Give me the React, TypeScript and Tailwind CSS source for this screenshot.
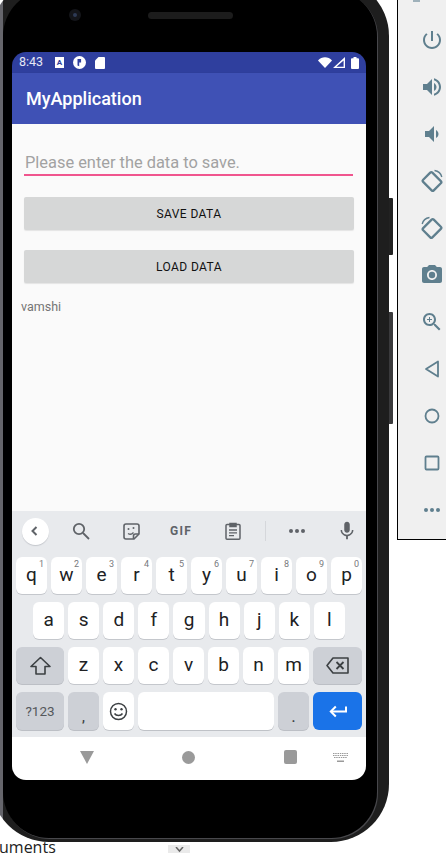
import React from 'react';

const rowOne = [
  ['q', '1'], ['w', '2'], ['e', '3'], ['r', '4'], ['t', '5'],
  ['y', '6'], ['u', '7'], ['i', '8'], ['o', '9'], ['p', '0'],
];
const rowTwo = ['a', 's', 'd', 'f', 'g', 'h', 'j', 'k', 'l'];
const rowThree = ['z', 'x', 'c', 'v', 'b', 'n', 'm'];

function Key({ label, hint }: { label: string; hint?: string }) {
  return (
    <div className="relative flex-1 rounded-[6px] bg-white shadow-[0_1px_0_#c4c7cc] flex items-center justify-center text-[19px] text-[#202124]">
      {label}
      {hint && <span className="absolute top-[2px] right-[3px] text-[9px] leading-[11px] text-[#77797d]">{hint}</span>}
    </div>
  );
}

function ModKey({ className, children }: { className: string; children: React.ReactNode }) {
  return (
    <div className={`rounded-[6px] bg-[#cdd0d6] shadow-[0_1px_0_#bcbfc5] flex items-center justify-center text-[#3c4043] ${className}`}>
      {children}
    </div>
  );
}

function Tool({ className, children }: { className: string; children: React.ReactNode }) {
  return <div className={`flex items-center justify-center shrink-0 ${className}`}>{children}</div>;
}

function PanelIcon({ children }: { children: React.ReactNode }) {
  return (
    <div className="h-[47px] flex items-center justify-center">
      <svg width="24" height="24" viewBox="0 0 24 24" fill="#5f7f8e">
        {children}
      </svg>
    </div>
  );
}

function StatusBar() {
  return (
    <div className="h-[21px] bg-[#2f3f9e] flex items-center pl-[7px] pr-[7px] text-white text-[12.5px]">
      <span className="w-[36px] text-[#e6e8f5]">8:43</span>
      <div className="w-[9px] h-[11px] bg-white flex items-center justify-center text-[8px] font-bold text-[#2f3f9e] leading-none">A</div>
      <svg className="ml-[9px]" width="13" height="13" viewBox="0 0 13 13">
        <circle cx="6.5" cy="6.5" r="6.5" fill="#fff" />
        <path d="M4.5 3h3.6v3.4H6.2v3.8L4.5 9.6z" fill="#2f3f9e" />
      </svg>
      <svg className="ml-[9px]" width="10" height="12" viewBox="0 0 10 12">
        <path d="M3.5 0H9a1 1 0 0 1 1 1v10a1 1 0 0 1-1 1H1a1 1 0 0 1-1-1V3.5z" fill="#fff" />
      </svg>
      <div className="flex-1" />
      <svg width="14" height="11" viewBox="0 0 14 11">
        <path d="M0 3.4C3.8-.9 10.2-.9 14 3.4L7 11z" fill="#fff" />
      </svg>
      <svg className="ml-[1px]" width="12" height="11" viewBox="0 0 12 11">
        <path d="M12 0v11H0zM10.6 3.4 3.4 9.8h7.2z" fill="#fff" fillRule="evenodd" />
      </svg>
      <svg className="ml-[6px]" width="8" height="12" viewBox="0 0 8 12">
        <path d="M2.5 0h3v1.2H7a1 1 0 0 1 1 1V11a1 1 0 0 1-1 1H1a1 1 0 0 1-1-1V2.200a1 1 0 0 1 1-1h1.500z" fill="#fff" />
      </svg>
    </div>
  );
}

function Toolbar() {
  return (
    <div className="h-[46px] flex items-center pb-[6px]">
      <Tool className="w-[46px]">
        <div className="w-[27px] h-[27px] rounded-full bg-white shadow-[0_1px_1px_#c4c7cc] flex items-center justify-center">
          <svg width="12" height="12" viewBox="0 0 12 12" fill="none" stroke="#5f6368" strokeWidth="2">
            <path d="M7.500 2 3.500 6l4 4" />
          </svg>
        </div>
      </Tool>
      <Tool className="w-[46px]">
        <svg width="18" height="18" viewBox="0 0 18 18" fill="none" stroke="#5f6368" strokeWidth="1.800">
          <circle cx="7" cy="7" r="5.200" />
          <path d="m11 11 6 6" />
        </svg>
      </Tool>
      <Tool className="w-[54px]">
        <svg width="17" height="17" viewBox="0 0 17 17" fill="none" stroke="#5f6368" strokeWidth="1.600">
          <path d="M3 1h11a2 2 0 0 1 2 2v8l-5 5H3a2 2 0 0 1-2-2V3a2 2 0 0 1 2-2z" />
          <path d="M10.500 16v-3a2 2 0 0 1 2-2H16" />
          <path d="M5 10.500c2 1.300 4 .8 5.500-1" strokeWidth="1.300" />
          <circle cx="5.500" cy="6" r="1" fill="#5f6368" stroke="none" />
          <circle cx="10.500" cy="5" r="1" fill="#5f6368" stroke="none" />
        </svg>
      </Tool>
      <Tool className="w-[46px] text-[12px] font-bold tracking-[1.2px] text-[#5f6368]">GIF</Tool>
      <Tool className="w-[58px]">
        <svg width="16" height="18" viewBox="0 0 16 18" fill="none" stroke="#5f6368" strokeWidth="1.500">
          <path d="M5 2.500H2a1 1 0 0 0-1 1v12.700a1 1 0 0 0 1 1h12a1 1 0 0 0 1-1V3.500a1 1 0 0 0-1-1h-3" />
          <path d="M5 1.500h6V4.500H5z" fill="#5f6368" />
          <path d="M4 8h8M4 10.800h8M4 13.600h5" strokeWidth="1.300" />
        </svg>
      </Tool>
      <Tool className="w-[6px]">
        <div className="w-px h-[20px] bg-[#d5d7db]" />
      </Tool>
      <Tool className="w-[58px] gap-[2px]">
        <div className="w-[4px] h-[4px] rounded-full bg-[#5f6368]" />
        <div className="w-[4px] h-[4px] rounded-full bg-[#5f6368]" />
        <div className="w-[4px] h-[4px] rounded-full bg-[#5f6368]" />
      </Tool>
      <Tool className="w-[42px]">
        <svg width="22" height="22" viewBox="0 0 24 24" fill="#5f6368">
          <path d="M12 14c1.660 0 2.990-1.340 2.990-3L15 5c0-1.660-1.340-3-3-3S9 3.340 9 5v6c0 1.660 1.340 3 3 3zm5.300-3c0 3-2.540 5.100-5.300 5.100S6.700 14 6.700 11H5c0 3.410 2.720 6.230 6 6.720V21h2v-3.280c3.280-.48 6-3.300 6-6.720h-1.700z" />
        </svg>
      </Tool>
    </div>
  );
}

function Keyboard() {
  return (
    <div className="h-[226px] bg-[#e8eaed]">
      <Toolbar />
      <div className="flex flex-col gap-[8px] px-[4px]">
        <div className="h-[37px] flex gap-[4px]">
          {rowOne.map(([k, n]) => <Key key={k} label={k} hint={n} />)}
        </div>
        <div className="h-[37px] flex gap-[4px] px-[17px]">
          {rowTwo.map((k) => <Key key={k} label={k} />)}
        </div>
        <div className="h-[37px] flex gap-[4px]">
          <ModKey className="w-[48px] shrink-0">
            <svg width="21" height="20" viewBox="0 0 21 20" fill="none" stroke="#3c4043" strokeWidth="1.600" strokeLinejoin="round">
              <path d="M10.500 1.500 1 10.500h5v7.500h9v-7.500h5z" />
            </svg>
          </ModKey>
          {rowThree.map((k) => <Key key={k} label={k} />)}
          <ModKey className="w-[49px] shrink-0">
            <svg width="23" height="17" viewBox="0 0 23 17" fill="none" stroke="#3c4043" strokeWidth="1.600">
              <path d="M7 1h15v15H7L1 8.500z" strokeLinejoin="round" />
              <path d="m10.500 5 7 7m0-7-7 7" strokeWidth="1.800" />
            </svg>
          </ModKey>
        </div>
        <div className="h-[38px] flex gap-[4px]">
          <ModKey className="w-[48px] shrink-0 text-[13.5px] text-[#55585c]">?123</ModKey>
          <ModKey className="w-[31px] shrink-0 text-[12px] font-bold pt-[14px]">,</ModKey>
          <div className="w-[31px] shrink-0 rounded-[6px] bg-white shadow-[0_1px_0_#c4c7cc] flex items-center justify-center">
            <svg width="19" height="19" viewBox="0 0 19 19" fill="none" stroke="#3c4043" strokeWidth="1.500">
              <circle cx="9.500" cy="9.500" r="8" />
              <path d="M5.500 11.500c1.800 2.800 6.200 2.800 8 0" />
              <circle cx="6.500" cy="7.200" r="1.200" fill="#3c4043" stroke="none" />
              <circle cx="12.500" cy="7.200" r="1.200" fill="#3c4043" stroke="none" />
            </svg>
          </div>
          <div className="flex-1 rounded-[6px] bg-white shadow-[0_1px_0_#bfc2c7]" />
          <ModKey className="w-[31px] shrink-0 text-[12px] font-bold pt-[14px]">.</ModKey>
          <div className="w-[49px] shrink-0 rounded-[6px] bg-[#1a73e8] flex items-center justify-center">
            <svg width="18" height="13" viewBox="0 0 18 13" fill="none" stroke="#fff" strokeWidth="2">
              <path d="M17 1.500v5H2.500" />
              <path d="M6.800 1.500 1.800 6.500l5 5" />
            </svg>
          </div>
        </div>
      </div>
    </div>
  );
}

function NavBar() {
  return (
    <div className="flex-1 bg-white flex items-center pl-[68px] pb-[3px]">
      <div className="w-0 h-0 border-x-[7px] border-x-transparent border-t-[13px] border-t-[#9a9a9a]" />
      <div className="ml-[88px] w-[13px] h-[13px] rounded-full bg-[#9a9a9a]" />
      <div className="ml-[89px] w-[13px] h-[14px] rounded-[2px] bg-[#9a9a9a]" />
      <svg className="ml-[36px]" width="15" height="9" viewBox="0 0 15 9" fill="#9a9a9a">
        <path d="M0 0h1.500v1H0zM2.200 0h1.500v1H2.200zM4.500 0H6v1H4.500zM6.800 0h1.500v1H6.800zM9 0h1.500v1H9zM11.200 0h1.500v1h-1.500zM13.500 0H15v1h-1.500zM0 2h1.500v1H0zM2.200 2h1.500v1H2.200zM4.500 2H6v1H4.500zM6.800 2h1.500v1H6.800zM9 2h1.500v1H9zM11.200 2h1.500v1h-1.500zM13.500 2H15v1h-1.500zM1 4h1.500v1H1zM3.200 4h1.500v1H3.200zM5.500 4H7v1H5.500zM7.800 4h1.500v1H7.800zM10 4h1.500v1H10zM12.200 4h1.500v1h-1.500zM4 7.500h7V9H4z" />
      </svg>
    </div>
  );
}

function Screen() {
  return (
    <div className="ml-[9px] w-[354px] h-[728px] rounded-[14px] overflow-hidden flex flex-col [font-family:Roboto,sans-serif]">
      <StatusBar />
      <div className="h-[51px] bg-[#3f51b5] shadow-[0_1px_2px_rgba(0,0,0,0.25)] flex items-center pl-[14px] pb-[1px] text-[18px] font-medium text-white">
        MyApplication
      </div>
      <div className="h-[387px] bg-[#fafafa] flex flex-col">
        <div className="h-[39px] mt-[13px] ml-[12px] mr-[13px] border-b-2 border-[#f0558e] pl-px flex items-end text-[16.400px] leading-[22px] text-[#a2a2a2]">
          Please enter the data to save.
        </div>
        <button className="mt-[21px] mx-[12px] w-[330px] h-[33px] rounded-[2px] bg-[#d6d7d7] shadow-[0_1px_1px_#e4e4e4] text-[12px] font-normal tracking-[0.4px] text-[#111111]">
          SAVE DATA
        </button>
        <button className="mt-[20px] mx-[12px] w-[330px] h-[33px] rounded-[2px] bg-[#d6d7d7] shadow-[0_1px_1px_#e4e4e4] text-[12px] font-normal tracking-[0.4px] text-[#111111]">
          LOAD DATA
        </button>
        <div className="mt-[16px] ml-[9px] text-[12.500px] leading-[16px] text-[#757575]">vamshi</div>
      </div>
      <Keyboard />
      <NavBar />
    </div>
  );
}

function Phone() {
  return (
    <div className="-ml-[9px] -mt-[22px] w-[398px] h-[864px] shrink-0 rounded-[58px] bg-[linear-gradient(90deg,#66666c_0%,#66666c_3%,#1e1e1e_3.100%)] pt-[12px] pl-[12px]">
      <div className="w-[374px] h-[848px] rounded-[46px] bg-black shadow-[1px_1px_0_#48484c] flex flex-col pt-[19px]">
        <div className="h-[12px] flex items-center">
          <div className="ml-[66px] w-[12px] h-[12px] rounded-full bg-[#14151a] flex items-center justify-center">
            <div className="w-[4px] h-[4px] rounded-full bg-[#2e3a55]" />
          </div>
          <div className="ml-[67px] w-[85px] h-[7px] rounded-full bg-[#1c1c1c]" />
        </div>
        <div className="h-[31px] shrink-0" />
        <Screen />
      </div>
    </div>
  );
}

function SidePanel() {
  return (
    <div className="ml-[4px] w-[68px] h-[540px] shrink-0 border-l border-b border-black bg-[#f0f0f0] flex flex-col">
      {/* window minimise dash, mostly cut off by the top of the picture */}
      <div className="h-[16px] shrink-0 pl-[15px]">
        <div className="w-[7px] h-[2px] bg-[#9fb1ba]" />
      </div>
      <PanelIcon><path d="M13 3h-2v10h2V3zm4.830 2.170l-1.420 1.420C17.990 7.860 19 9.810 19 12c0 3.870-3.130 7-7 7s-7-3.130-7-7c0-2.190 1.010-4.140 2.580-5.420L6.170 5.170C4.230 6.820 3 9.260 3 12c0 4.970 4.030 9 9 9s9-4.030 9-9c0-2.740-1.230-5.180-3.170-6.830z" /></PanelIcon>
      <PanelIcon><path d="M3 9v6h4l5 5V4L7 9H3zm13.500 3c0-1.770-1.020-3.290-2.500-4.030v8.050c1.480-.73 2.500-2.250 2.500-4.020zM14 3.230v2.060c2.890.86 5 3.540 5 6.710s-2.110 5.850-5 6.710v2.060c4.010-.91 7-4.490 7-8.770s-2.990-7.860-7-8.770z" /></PanelIcon>
      <PanelIcon><path d="M18.500 12c0-1.770-1.020-3.290-2.500-4.030v8.050c1.480-.73 2.500-2.250 2.500-4.020zM5 9v6h4l5 5V4L9 9H5z" /></PanelIcon>
      <PanelIcon>
        <g fill="none" stroke="#5f7f8e" strokeWidth="2.300">
          <rect x="4.500" y="6" width="15" height="13" rx="1.500" transform="rotate(45 12 12.500)" />
          <path d="M14.500 1.500c3.500.5 6.500 3 7.300 6.500" strokeWidth="1.400" />
        </g>
      </PanelIcon>
      <PanelIcon>
        <g fill="none" stroke="#5f7f8e" strokeWidth="2.300">
          <rect x="4.500" y="6" width="15" height="13" rx="1.500" transform="rotate(-45 12 12.500)" />
          <path d="M9.500 1.500C6 2 3 4.500 2.200 8" strokeWidth="1.400" />
        </g>
      </PanelIcon>
      <PanelIcon>
        <path d="M9 2 7.170 4H4c-1.100 0-2 .9-2 2v12c0 1.100.9 2 2 2h16c1.100 0 2-.9 2-2V6c0-1.100-.9-2-2-2h-3.170L15 2H9zm3 15c-2.760 0-5-2.240-5-5s2.240-5 5-5 5 2.240 5 5-2.240 5-5 5z" />
        <circle cx="12" cy="12" r="3.200" />
      </PanelIcon>
      <PanelIcon><path d="M15.500 14h-.79l-.28-.27C15.410 12.590 16 11.110 16 9.500 16 5.910 13.090 3 9.500 3S3 5.910 3 9.500 5.910 16 9.500 16c1.610 0 3.090-.59 4.230-1.570l.27.28v.79l5 4.990L20.490 19l-4.990-5zm-6 0C7.010 14 5 11.990 5 9.500S7.010 5 9.500 5 14 7.010 14 9.500 11.990 14 9.500 14zM12 10h-2v2H9v-2H7V9h2V7h1v2h2v1z" /></PanelIcon>
      <PanelIcon><path d="M18 4.500v15L6 12z" fill="none" stroke="#5f7f8e" strokeWidth="1.800" strokeLinejoin="round" /></PanelIcon>
      <PanelIcon><circle cx="12" cy="12" r="6.500" fill="none" stroke="#5f7f8e" strokeWidth="1.800" /></PanelIcon>
      <PanelIcon><rect x="5.500" y="5.500" width="13" height="13" rx="1" fill="none" stroke="#5f7f8e" strokeWidth="1.800" /></PanelIcon>
      <PanelIcon>
        <circle cx="6" cy="12" r="2" />
        <circle cx="12" cy="12" r="2" />
        <circle cx="18" cy="12" r="2" />
      </PanelIcon>
    </div>
  );
}

export default function App() {
  return (
    <div className="w-[446px] h-[853px] overflow-hidden bg-white flex flex-col">
      <div className="h-[842px] shrink-0 flex items-start">
        <Phone />
        <div className="w-[4px] shrink-0 pt-[198px] flex flex-col">
          <div className="h-[57px] bg-[#222222] rounded-r-[1px]" />
          <div className="h-[57px]" />
          <div className="h-[112px] bg-[#3a3a3c] rounded-r-[1px]" />
        </div>
        <SidePanel />
      </div>
      <div className="flex items-start h-[11px]">
        <span className="-ml-[1px] -mt-[3px] w-[169px] [font-family:'Open_Sans',sans-serif] text-[16px] leading-[16px] text-[#222222]">uments</span>
        <div className="w-[22px] h-[8px] mt-[3px] bg-[#eaeaea] flex items-end justify-center">
          <svg width="9" height="6" viewBox="0 0 9 6" fill="none" stroke="#666666" strokeWidth="1.500"><path d="m1 0 3.500 4L8 0" /></svg>
        </div>
      </div>
    </div>
  );
}
